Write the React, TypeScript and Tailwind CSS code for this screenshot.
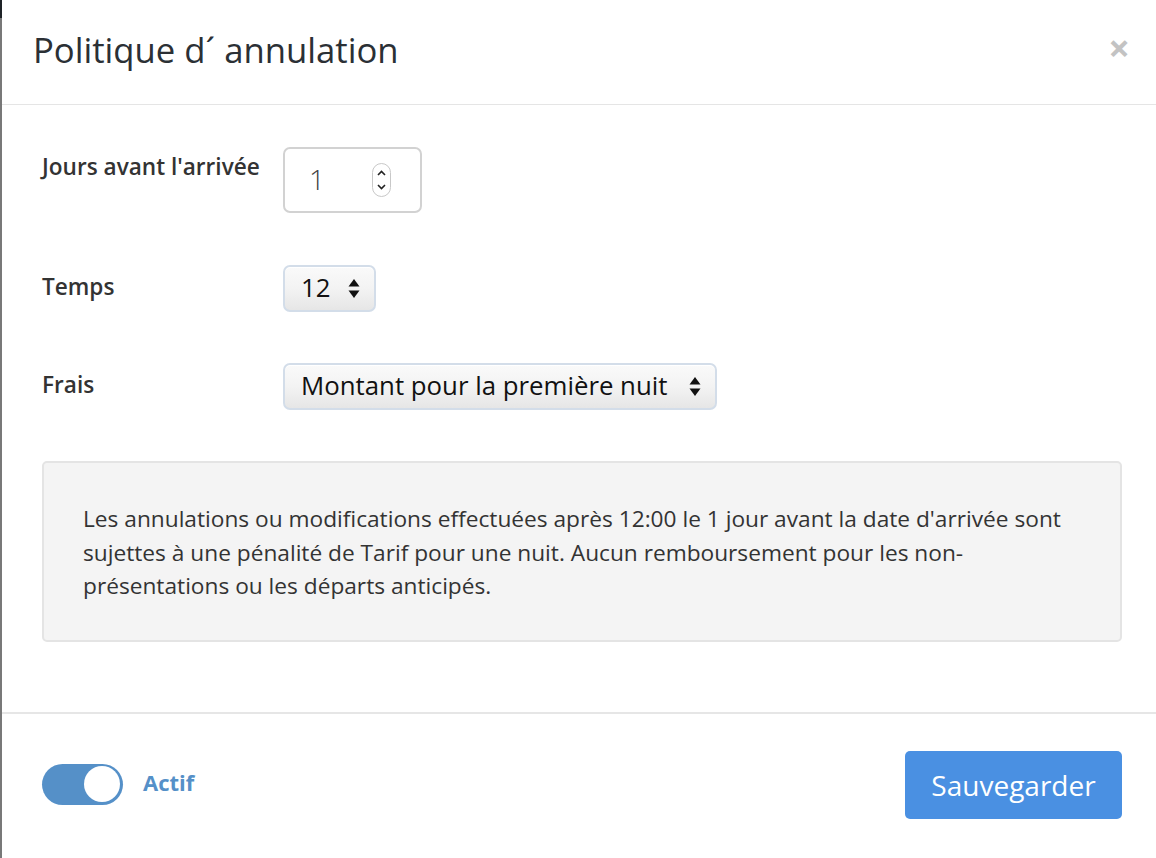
import React from "react";

const font = { fontFamily: '"Open Sans", "Liberation Sans", sans-serif' };

function UpDown() {
  return (
    <svg width="12" height="21" viewBox="0 0 12 21" className="shrink-0">
      <path d="M6 1 L11.5 8.5 L0.5 8.5 Z" fill="#111" />
      <path d="M6 20 L11.5 12.5 L0.5 12.5 Z" fill="#111" />
    </svg>
  );
}

function Select({ value, width }: { value: string; width: string }) {
  return (
    <div
      className={`${width} h-[47px] rounded-[7px] border-2 border-[#d3dde9] bg-gradient-to-b from-[#fafafa] via-[#f3f3f3] to-[#e6e6e6] flex items-center justify-between pl-[16px] pr-[14px] shadow-[inset_0_1px_0_#fff]`}
    >
      <span className="text-[25.8px] text-[#111] leading-none -mt-[2px]">{value}</span>
      <UpDown />
    </div>
  );
}

export default function App() {
  return (
    <div className="w-[1156px] h-[858px] flex bg-white" style={font}>
      <div className="w-[2px] flex flex-col shrink-0">
        <div className="h-[18px] bg-[#1e2327]" />
        <div className="flex-1 bg-[#787878]" />
      </div>
      <div className="flex-1 flex flex-col">
        {/* header */}
        <div className="h-[105px] border-b border-[#e5e5e5] flex items-center justify-between pl-[31px] pr-[26px] pb-[3px]">
          <h1 className="text-[34.7px] text-[#2b3035] font-normal leading-none">Politique d´ annulation</h1>
          <span className="text-[38px] font-bold text-[#c3c3c3] leading-none -mt-[8px]">×</span>
        </div>
        {/* body */}
        <div className="flex-1 pl-[40px] pr-[34px] pt-[42px] flex flex-col">
          <div className="flex items-start">
            <div className="w-[241px] pt-[3px] text-[22.6px] font-semibold text-[#333]">Jours avant l'arrivée</div>
            <div className="w-[139px] h-[66px] rounded-[7px] border-2 border-[#d2d2d2] flex items-center justify-between pl-[24px] pr-[29px]">
              <span className="text-[28px] text-[#444] font-light -mt-[2px]">1</span>
              <div className="w-[19px] h-[34px] rounded-full border border-[#c8c8c8] flex flex-col items-center justify-between py-[6px]">
                <svg width="9" height="6" viewBox="0 0 9 6"><path d="M1 5 L4.5 1.5 L8 5" fill="none" stroke="#222" strokeWidth="1.6" /></svg>
                <svg width="9" height="6" viewBox="0 0 9 6"><path d="M1 1 L4.5 4.5 L8 1" fill="none" stroke="#222" strokeWidth="1.6" /></svg>
              </div>
            </div>
          </div>
          <div className="flex items-center mt-[52px]">
            <div className="w-[241px] text-[22.6px] font-semibold text-[#333] -mt-[4px]">Temps</div>
            <Select value="12" width="w-[93px]" />
          </div>
          <div className="flex items-center mt-[51px]">
            <div className="w-[241px] text-[22.6px] font-semibold text-[#333] -mt-[4px]">Frais</div>
            <Select value="Montant pour la première nuit" width="w-[434px]" />
          </div>
          <div className="mt-[51px] h-[181px] rounded-[5px] border-2 border-[#e4e4e4] bg-[#f4f4f4] pl-[39px] pr-[30px] pt-[39px]">
            <p className="text-[22.7px] leading-[33.5px] text-[#333]">
              Les annulations ou modifications effectuées après 12:00 le 1 jour avant la date d'arrivée sont sujettes à une pénalité de Tarif pour une nuit. Aucun remboursement pour les non-présentations ou les départs anticipés.
            </p>
          </div>
        </div>
        {/* footer */}
        <div className="h-[146px] border-t-2 border-[#e6e6e6] flex items-center justify-between pl-[40px] pr-[34px]">
          <div className="flex items-center gap-[20px] -mt-[4px]">
            <div className="w-[81px] h-[41px] rounded-full bg-[#5590c8] flex items-center justify-end pr-[3px]">
              <div className="w-[36px] h-[36px] rounded-full bg-white" />
            </div>
            <span className="text-[22px] font-bold text-[#5590c8] -mt-[3px]">Actif</span>
          </div>
          <button className="w-[217px] h-[68px] rounded-[5px] bg-[#4a90e2] text-white text-[28px] -mt-[2px]">Sauvegarder</button>
        </div>
      </div>
    </div>
  );
}
